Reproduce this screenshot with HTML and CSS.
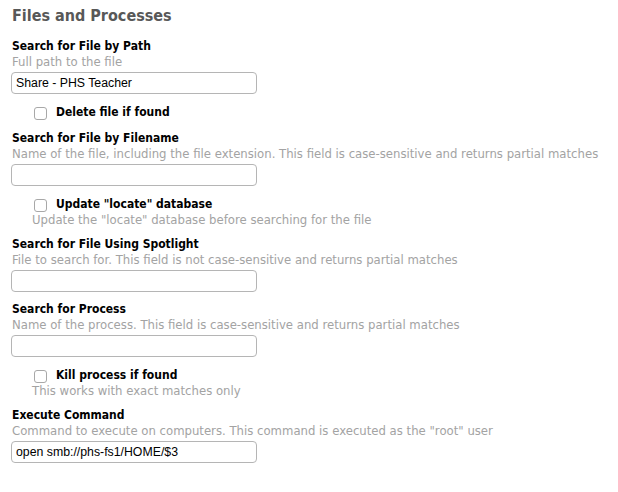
FILE: index.html
```html
<!DOCTYPE html>
<html>
<head>
<meta charset="utf-8">
<link rel="stylesheet" href="styles.css">
</head>
<body>
<div class="page">
  <h2 class="title">Files and Processes</h2>

  <div class="field first">
    <div class="label">Search for File by Path</div>
    <div class="help">Full path to the file</div>
    <input class="text" type="text" value="Share - PHS Teacher">
  </div>
  <label class="check">
    <span class="box"></span>
    <span class="check-label">Delete file if found</span>
  </label>

  <div class="field">
    <div class="label">Search for File by Filename</div>
    <div class="help">Name of the file, including the file extension. This field is case-sensitive and returns partial matches</div>
    <input class="text" type="text" value="">
  </div>
  <label class="check">
    <span class="box"></span>
    <span class="check-label">Update "locate" database</span>
  </label>
  <div class="help check-help">Update the "locate" database before searching for the file</div>

  <div class="field after-help">
    <div class="label">Search for File Using Spotlight</div>
    <div class="help">File to search for. This field is not case-sensitive and returns partial matches</div>
    <input class="text" type="text" value="">
  </div>

  <div class="field tight">
    <div class="label">Search for Process</div>
    <div class="help">Name of the process. This field is case-sensitive and returns partial matches</div>
    <input class="text" type="text" value="">
  </div>
  <label class="check">
    <span class="box"></span>
    <span class="check-label">Kill process if found</span>
  </label>
  <div class="help check-help">This works with exact matches only</div>

  <div class="field after-help">
    <div class="label">Execute Command</div>
    <div class="help">Command to execute on computers. This command is executed as the "root" user</div>
    <input class="text" type="text" value="open smb://phs-fs1/HOME/$3">
  </div>
</div>
</body>
</html>
```

FILE: styles.css
```css
html, body {
  margin: 0;
  padding: 0;
  background: #ffffff;
}
.page {
  padding: 6px 12px 0 12px;
  font-family: "DejaVu Sans", Verdana, sans-serif;
  font-size: 12px;
  color: #000;
}
.title {
  margin: 0;
  font-family: "DejaVu Sans Condensed", "DejaVu Sans", sans-serif;
  font-size: 16px;
  line-height: 20px;
  font-weight: bold;
  color: #585858;
}
.field {
  display: flex;
  flex-direction: column;
  margin-top: 10px;
}
.field.first {
  margin-top: 12px;
}
.field.after-help {
  margin-top: 8px;
}
.field.tight {
  margin-top: 9px;
}
.label {
  font-family: "DejaVu Sans Condensed", "DejaVu Sans", sans-serif;
  font-weight: bold;
  font-size: 12px;
  line-height: 16px;
}
.help {
  font-size: 11.7px;
  line-height: 16px;
  color: #a3a3a3;
  white-space: nowrap;
}
.text {
  box-sizing: border-box;
  width: 246px;
  height: 22px;
  margin: 2px 0 0 -1px;
  padding: 0 4px;
  border: 1px solid #b5b5b5;
  border-radius: 4px;
  font-family: "Liberation Sans", Arial, sans-serif;
  font-size: 12.3px;
  color: #000;
  background: #fff;
  outline: none;
}
.check {
  display: flex;
  align-items: center;
  gap: 9px;
  margin-top: 10px;
  padding-left: 22px;
  height: 16px;
}
.box {
  box-sizing: border-box;
  width: 13px;
  height: 13px;
  border: 1px solid #a8a8a8;
  border-radius: 3px;
  background: #fff;
  margin-top: 3px;
}
.check-label {
  font-family: "DejaVu Sans Condensed", "DejaVu Sans", sans-serif;
  font-weight: bold;
}
.check-help {
  padding-left: 20px;
}
```
